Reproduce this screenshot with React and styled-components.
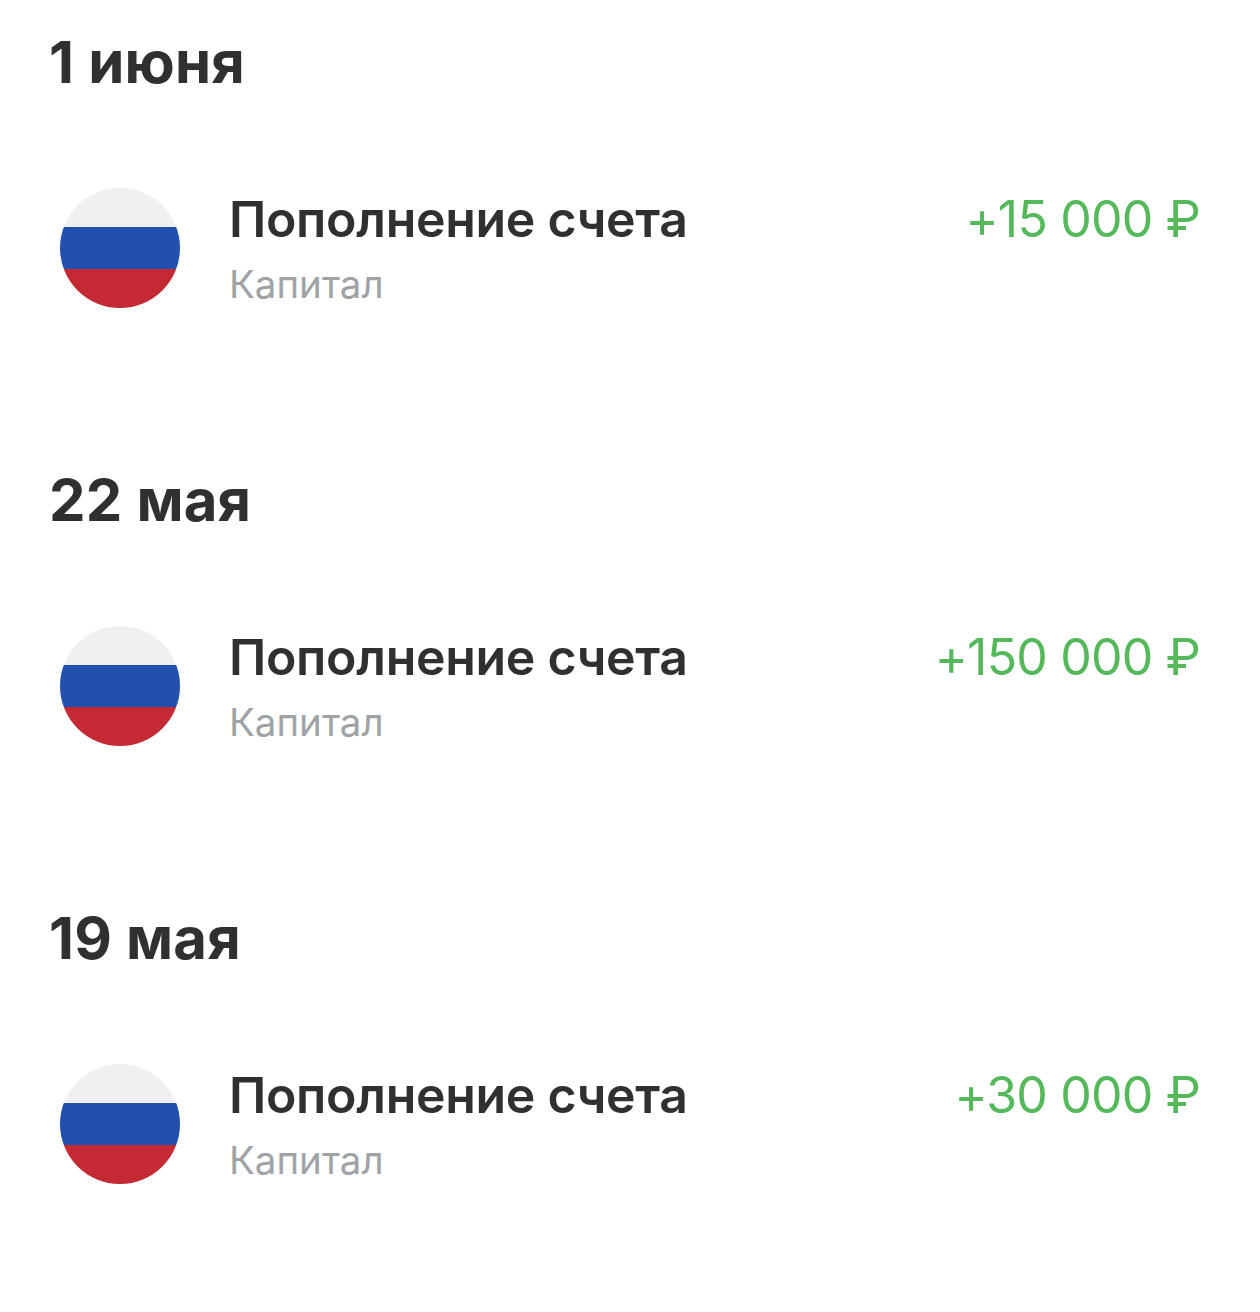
import React from "react";
import styled, { createGlobalStyle } from "styled-components";

const GlobalStyle = createGlobalStyle`
  html, body {
    margin: 0;
    padding: 0;
    background: #fff;
  }
`;

const Page = styled.div`
  width: 1260px;
  height: 1312px;
  overflow: hidden;
  box-sizing: border-box;
  padding: 30px 60px 0 49px;
  font-family: Inter, "Liberation Sans", sans-serif;
`;

const Section = styled.section`
  height: 438px;
`;

const DateTitle = styled.h2`
  margin: 0;
  font-size: 58px;
  line-height: 64px;
  font-weight: 700;
  letter-spacing: 0.2px;
  color: #303030;
`;

const Row = styled.div`
  display: flex;
  align-items: flex-start;
  margin-top: 94px;
  padding-left: 11px;
`;

const Flag = styled.div`
  flex: none;
  width: 120px;
  height: 120px;
  border-radius: 50%;
  background: linear-gradient(
    #f0f0f0 0 39px,
    #2150ae 39px 81px,
    #c42a33 81px 120px
  );
`;

const Info = styled.div`
  flex: 1;
  margin-left: 49px;
`;

const Title = styled.div`
  font-size: 50px;
  line-height: 62px;
  font-weight: 600;
  letter-spacing: -0.3px;
  color: #303030;
`;

const Sub = styled.div`
  margin-top: 11px;
  font-size: 38.5px;
  line-height: 46px;
  color: #a0a3a6;
`;

const Amount = styled.div`
  font-size: 50px;
  line-height: 62px;
  letter-spacing: -0.8px;
  color: #55b85a;
`;

const items = [
  { date: "1 июня", amount: "+15 000 ₽" },
  { date: "22 мая", amount: "+150 000 ₽" },
  { date: "19 мая", amount: "+30 000 ₽" },
];

const App = () => (
  <Page>
    <GlobalStyle />
    {items.map((item) => (
      <Section key={item.date}>
        <DateTitle>{item.date}</DateTitle>
        <Row>
          <Flag />
          <Info>
            <Title>Пополнение счета</Title>
            <Sub>Капитал</Sub>
          </Info>
          <Amount>{item.amount}</Amount>
        </Row>
      </Section>
    ))}
  </Page>
);

export default App;
